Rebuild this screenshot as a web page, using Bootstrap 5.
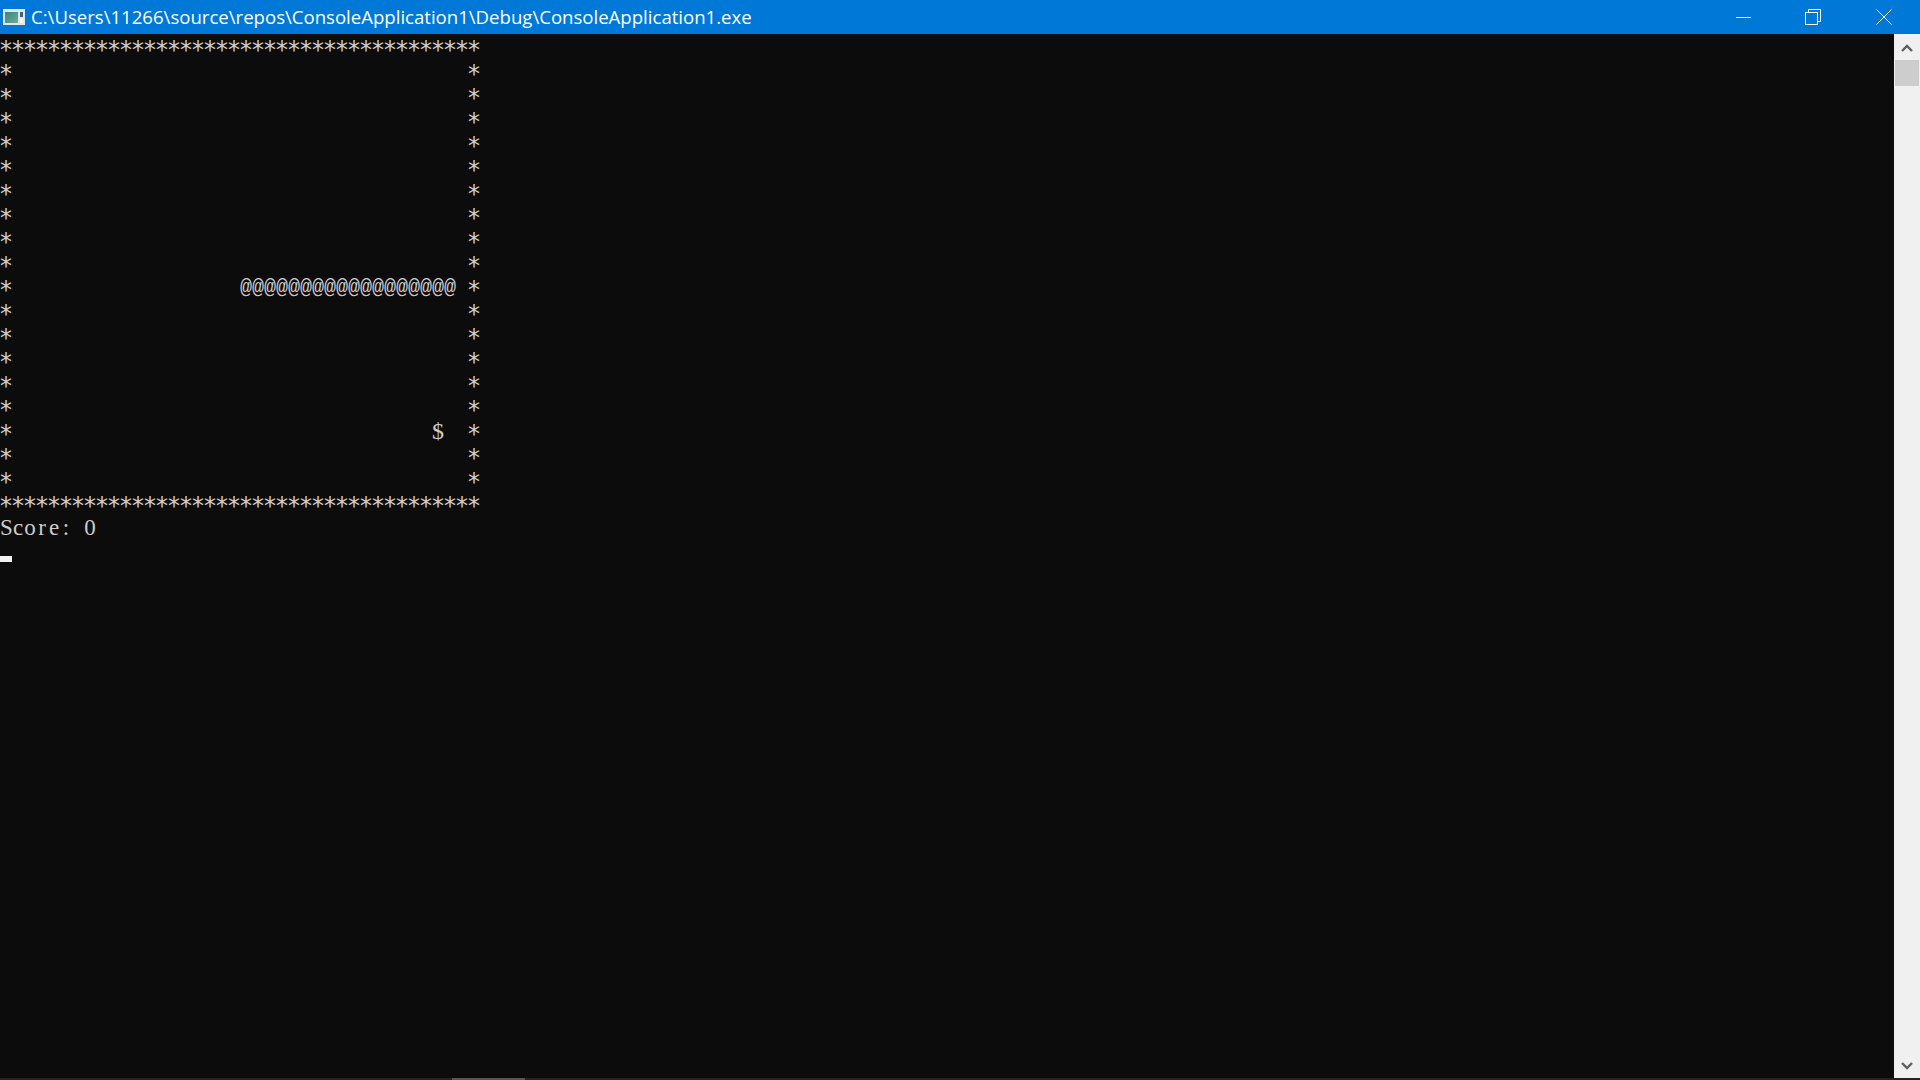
<!DOCTYPE html>
<html lang="en">
<head>
<meta charset="utf-8">
<title>ConsoleApplication1</title>
<link href="https://cdn.jsdelivr.net/npm/bootstrap@5.3.0/dist/css/bootstrap.min.css" rel="stylesheet">
<style>
html, body { height: 100%; margin: 0; overflow: hidden; background: #0c0c0c; }
.win { height: 1080px; width: 1920px; }
.titlebar { height: 34px; background: #0078d7; color: #fff; font-family: "Open Sans", sans-serif; font-size: 18.58px; flex: none; padding-right: 1px; }
.appicon { margin: 0 6px 0 3px; flex: none; }
.capbtn { width: 70px; height: 34px; flex: none; padding-bottom: 1px; }
.capmid { padding-right: 3px; }
.title-text { line-height: 34px; white-space: nowrap; }
.midarea { min-height: 0; }
.console { background: #0c0c0c; color: #ccc; font-family: "DejaVu Sans Mono", monospace; font-size: 24px; line-height: 24px; letter-spacing: -2.45px; overflow: hidden; }
.console pre { margin: 0; font: inherit; letter-spacing: inherit; height: 24px; padding-top: 4px; overflow: visible; text-indent: -1.2px; }
.hi { font-family: "Liberation Mono", monospace; font-size: 20px; letter-spacing: 0; line-height: 0; vertical-align: 5px; margin-left: 1.2px; margin-right: -1.2px; }
.dollar { font-family: "Liberation Serif", serif; font-size: 24px; line-height: 0; vertical-align: 3px; letter-spacing: 0; margin-left: 1.2px; margin-right: -1.2px; }
.console pre.scoreline { font-family: "Liberation Serif", serif; font-size: 23px; padding-top: 2px; letter-spacing: 0; text-indent: 0; }
.gcell { display: inline-block; width: 12px; text-align: center; }
.caret { width: 12px; height: 6px; background: #f2f2f2; margin-top: 18px; }
.vscroll { width: 26px; background: #f0f0f0; flex: none; }
.sbtn { height: 26px; flex: none; padding-top: 2px; }
.sthumb { width: 24px; height: 26px; background: #cdcdcd; margin-left: 1px; flex: none; }
.hscroll { height: 2px; background: #222; flex: none; }
.hthumb { width: 73px; height: 2px; margin-left: 452px; background: #555; }
</style>
</head>
<body>
<div class="win d-flex flex-column">
  <div class="titlebar d-flex align-items-center">
    <svg class="appicon" width="22" height="16" viewBox="0 0 22 16"><defs><linearGradient id="pane" x1="0" y1="0" x2="1" y2="1"><stop offset="0" stop-color="#3a7f9a"/><stop offset="1" stop-color="#6faf86"/></linearGradient></defs><rect width="22" height="16" fill="#dfe6ea"/><rect x="2" y="3" width="13" height="11" fill="url(#pane)"/><rect x="17" y="3" width="3" height="5" fill="#48647a"/><rect x="17" y="9" width="3" height="5" fill="#f4f6f6"/></svg>
    <div class="title-text flex-grow-1">C:\Users\11266\source\repos\ConsoleApplication1\Debug\ConsoleApplication1.exe</div>
    <div class="capbtn d-flex align-items-center justify-content-center"><svg width="16" height="16" viewBox="0 0 16 16"><path d="M0 8.5H15" stroke="#fff"/></svg></div>
    <div class="capbtn capmid d-flex align-items-center justify-content-center"><svg width="16" height="16" viewBox="0 0 16 16"><path d="M3.5 3.5V.5H15.5V12.5H12.5" fill="none" stroke="#fff"/><rect x=".5" y="3.5" width="12" height="12" fill="none" stroke="#fff"/></svg></div>
    <div class="capbtn d-flex align-items-center justify-content-center"><svg width="16" height="16" viewBox="0 0 16 16"><path d="M.5.5L15.5 15.5M15.5.5L.5 15.5" stroke="#fff"/></svg></div>
  </div>
  <div class="midarea d-flex flex-grow-1">
    <div class="console flex-grow-1">
<pre>****************************************</pre>
<pre>*                                      *</pre>
<pre>*                                      *</pre>
<pre>*                                      *</pre>
<pre>*                                      *</pre>
<pre>*                                      *</pre>
<pre>*                                      *</pre>
<pre>*                                      *</pre>
<pre>*                                      *</pre>
<pre>*                                      *</pre>
<pre>*                   <span class="hi">@@@@@@@@@@@@@@@@@@</span> *</pre>
<pre>*                                      *</pre>
<pre>*                                      *</pre>
<pre>*                                      *</pre>
<pre>*                                      *</pre>
<pre>*                                      *</pre>
<pre>*                                   <span class="dollar">$</span>  *</pre>
<pre>*                                      *</pre>
<pre>*                                      *</pre>
<pre>****************************************</pre>
<pre class="scoreline"><span class="gcell">S</span><span class="gcell">c</span><span class="gcell">o</span><span class="gcell">r</span><span class="gcell">e</span><span class="gcell">:</span><span class="gcell">&nbsp;</span><span class="gcell">0</span></pre>
<div class="caret"></div>
    </div>
    <div class="vscroll d-flex flex-column">
      <div class="sbtn d-flex align-items-center justify-content-center"><svg width="12" height="10" viewBox="0 0 12 10"><path d="M1 8L6 3L11 8" fill="none" stroke="#606060" stroke-width="2.4"/></svg></div>
      <div class="sthumb"></div>
      <div class="flex-grow-1"></div>
      <div class="sbtn d-flex align-items-center justify-content-center"><svg width="12" height="10" viewBox="0 0 12 10"><path d="M1 2L6 7L11 2" fill="none" stroke="#606060" stroke-width="2.4"/></svg></div>
    </div>
  </div>
  <div class="hscroll"><div class="hthumb"></div></div>
</div>
<script src="https://cdn.jsdelivr.net/npm/bootstrap@5.3.0/dist/js/bootstrap.bundle.min.js"></script>
</body>
</html>
